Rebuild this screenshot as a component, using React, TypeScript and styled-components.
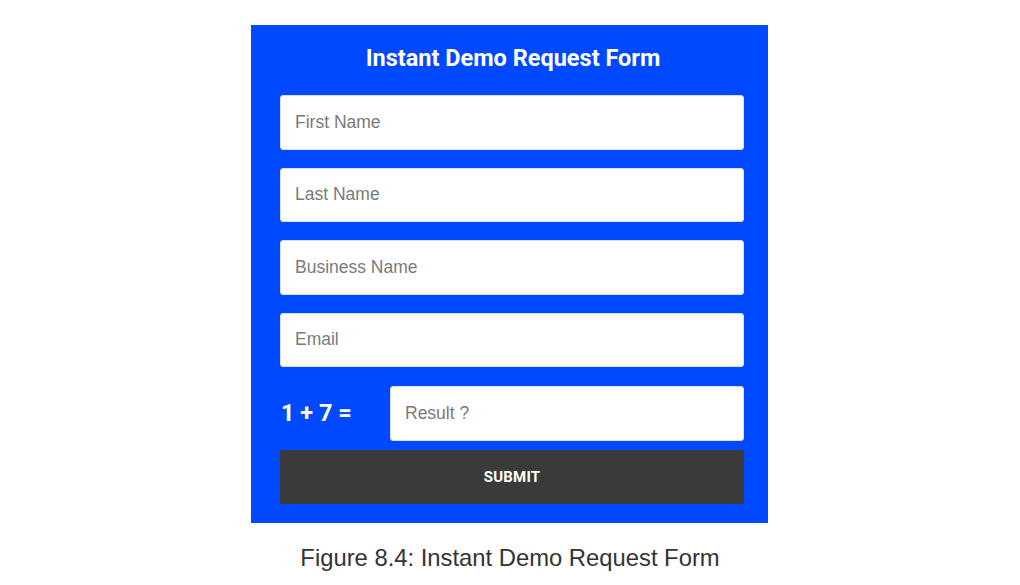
import React from "react";
import styled, { createGlobalStyle } from "styled-components";

const GlobalStyle = createGlobalStyle`
	html, body {
		margin: 0;
		padding: 0;
		background: #ffffff;
	}
`;

const Page = styled.div`
	width: 1020px;
	display: flex;
	flex-direction: column;
	align-items: center;
	padding-top: 25px;
`;

const Panel = styled.form`
	width: 517px;
	box-sizing: border-box;
	margin-left: -1px;
	background: #0049ff;
	padding: 20px 24px 19.5px 29px;
	display: flex;
	flex-direction: column;
`;

const Title = styled.h2`
	margin: 0 0 24px;
	font-family: Roboto, "Liberation Sans", sans-serif;
	font-weight: 700;
	font-size: 23.5px;
	line-height: 26px;
	color: #ffffff;
	text-align: center;
	padding-left: 2px;
`;

const Fields = styled.div`
	display: flex;
	flex-direction: column;
	gap: 18px;
`;

const Input = styled.input`
	box-sizing: border-box;
	width: 100%;
	height: 54.5px;
	border: 1px solid #d6e0ff;
	border-radius: 3px;
	background: #ffffff;
	padding: 0 14px;
	font-family: "Liberation Sans", Arial, sans-serif;
	font-size: 17.5px;
	color: #333;
	outline: none;

	&::placeholder {
		color: #7a7a7a;
	}
`;

const CaptchaRow = styled.div`
	display: flex;
	align-items: center;
	margin-top: 1px;
`;

const CaptchaLabel = styled.label`
	width: 109px;
	flex-shrink: 0;
	padding-left: 1px;
	font-family: Roboto, "Liberation Sans", sans-serif;
	font-weight: 700;
	font-size: 23.5px;
	color: #ffffff;
`;

const SubmitButton = styled.button`
	margin-top: 9px;
	height: 54px;
	border: none;
	border-radius: 1px;
	background: #3a3a3a;
	color: #ffffff;
	font-family: Roboto, "Liberation Sans", sans-serif;
	font-weight: 700;
	font-size: 15px;
	letter-spacing: 0.2px;
	cursor: pointer;
`;

const Caption = styled.p`
	margin: 22px 0 0;
	font-family: "Liberation Sans", Arial, sans-serif;
	font-size: 23.8px;
	line-height: 26px;
	color: #333333;
`;

const App: React.FC = () => {
	return (
		<>
			<GlobalStyle />
			<Page>
				<Panel onSubmit={(e) => e.preventDefault()}>
					<Title>Instant Demo Request Form</Title>
					<Fields>
						<Input placeholder="First Name" />
						<Input placeholder="Last Name" />
						<Input placeholder="Business Name" />
						<Input placeholder="Email" />
						<CaptchaRow>
							<CaptchaLabel>1 + 7 =</CaptchaLabel>
							<Input placeholder="Result ?" />
						</CaptchaRow>
					</Fields>
					<SubmitButton type="submit">SUBMIT</SubmitButton>
				</Panel>
				<Caption>Figure 8.4: Instant Demo Request Form</Caption>
			</Page>
		</>
	);
};

export default App;
